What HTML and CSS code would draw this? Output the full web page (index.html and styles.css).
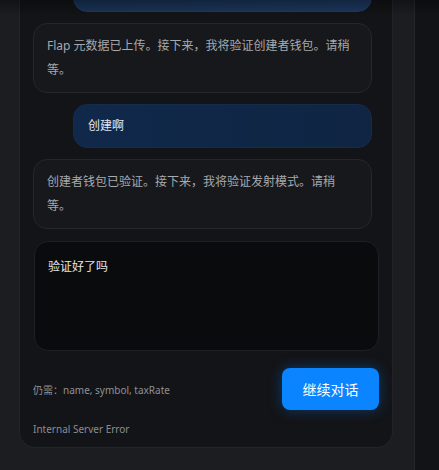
FILE: index.html
```html
<!DOCTYPE html>
<html lang="zh-CN">
<head>
<meta charset="utf-8">
<link rel="stylesheet" href="styles.css">
</head>
<body>
<div class="layout">
  <div class="gutter"></div>
  <section class="panel">
    <div class="messages">
      <div class="bubble user top-bubble" aria-hidden="true"></div>
      <div class="bubble assistant">Flap 元数据已上传。接下来，我将验证创建者钱包。请稍等。</div>
      <div class="bubble user">创建啊</div>
      <div class="bubble assistant">创建者钱包已验证。接下来，我将验证发射模式。请稍等。</div>
    </div>
    <div class="composer">
      <textarea class="input" readonly>验证好了吗</textarea>
      <div class="actions">
        <span class="hint">仍需：name, symbol, taxRate</span>
        <button class="send">继续对话</button>
      </div>
      <div class="error">Internal Server Error</div>
    </div>
  </section>
  <div class="side-gap"></div>
  <div class="side-strip"></div>
</div>
<div class="top-shade"></div>
</body>
</html>
```
FILE: styles.css
```css
* { box-sizing: border-box; }
html, body {
  margin: 0;
  height: 100%;
  overflow: hidden;
  background: #1b1d21;
  font-family: "Noto Sans", "Noto Sans CJK SC", sans-serif;
}
.layout {
  display: flex;
  height: 470px;
}
.gutter { width: 19px; flex: none; }
.panel {
  width: 374px;
  flex: none;
  height: 448px;
  display: flex;
  flex-direction: column;
  justify-content: flex-end;
  overflow: hidden;
  background: #131417;
  border: 1px solid #222429;
  border-top: none;
  border-radius: 0 0 16px 16px;
}
.messages {
  display: flex;
  flex-direction: column;
  gap: 11px;
  padding: 0 20px 0 13px;
}
.bubble {
  font-size: 12px;
  line-height: 24px;
  border-radius: 14px;
  border: 1px solid transparent;
}
.assistant {
  background: #17181c;
  border-color: #25272c;
  color: #a6a9ae;
  padding: 10px 13px;
}
.user {
  margin-left: 40px;
  background: linear-gradient(90deg, #10284a, #0f2543);
  border-color: #142c4d;
  color: #e4e8ee;
  padding: 9px 14px;
}
.top-bubble {
  background: linear-gradient(90deg, #1a3558, #1c3a62);
  border-color: #1f3d63;
  height: 60px;
}
.composer {
  padding: 12px 13px 11px 14px;
  display: flex;
  flex-direction: column;
}
.input {
  display: block;
  width: 100%;
  height: 110px;
  resize: none;
  background: #0a0b0d;
  border: 1px solid #1e2024;
  border-radius: 14px;
  padding: 13px 13px;
  font-family: "Noto Sans", "Noto Sans CJK SC", sans-serif;
  font-size: 12px;
  line-height: 24px;
  color: #e6e7ea;
  outline: none;
}
.actions {
  margin-top: 17px;
  display: flex;
  align-items: center;
  justify-content: space-between;
  margin-left: -1px;
}
.hint {
  font-size: 10px;
  color: #8e9196;
}
.send {
  width: 97px;
  height: 42px;
  border: none;
  border-radius: 8px;
  background: #0a84ff;
  color: #ffffff;
  font-family: "Noto Sans CJK SC", sans-serif;
  font-size: 14px;
  box-shadow: 0 0 14px rgba(10, 132, 255, 0.35);
}
.error {
  margin-top: 12px;
  margin-left: -1px;
  font-size: 10px;
  line-height: 14px;
  color: #8a8d92;
}
.side-gap { width: 22px; flex: none; border-right: 1px solid #25272b; }
.side-strip { flex: 1; background: #121317; }
.top-shade {
  position: absolute;
  top: 0;
  left: 0;
  right: 0;
  height: 16px;
  background: linear-gradient(rgba(0,0,0,0.35), rgba(0,0,0,0));
  pointer-events: none;
}
```
